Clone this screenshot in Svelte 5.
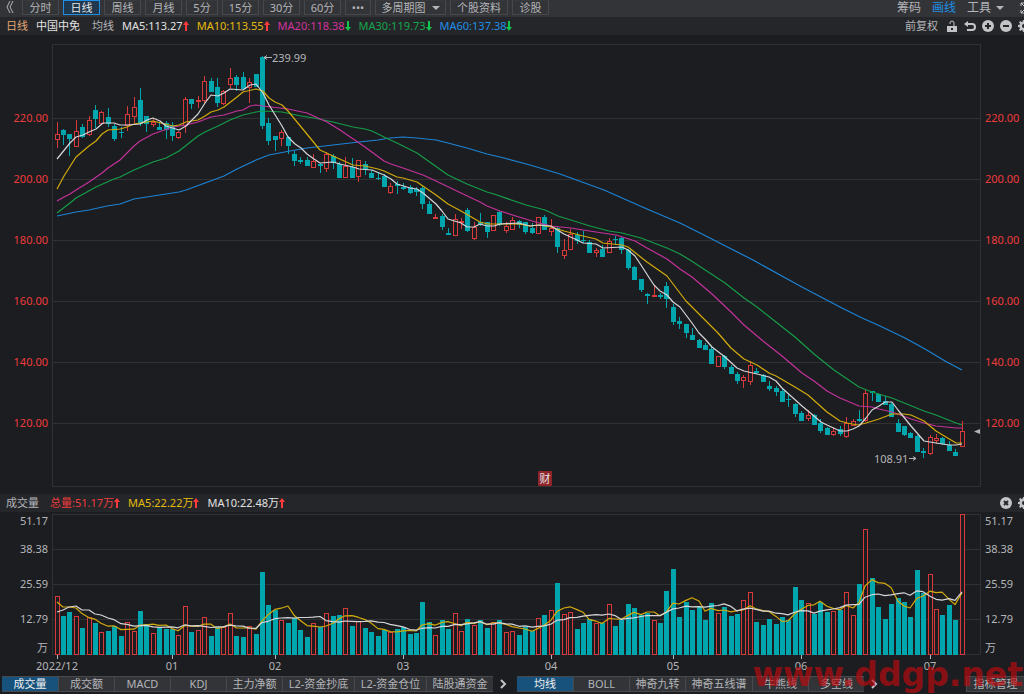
<script>
  const periods = [
    { label: '分时', size: 'std' },
    { label: '日线', size: 'std', active: true },
    { label: '周线', size: 'std' },
    { label: '月线', size: 'std' },
    { label: '5分', size: 'short' },
    { label: '15分', size: 'mid' },
    { label: '30分', size: 'mid' },
    { label: '60分', size: 'mid' },
    { label: '•••', size: 'dots' },
    { label: '多周期图', size: 'menu', caret: true },
    { label: '个股资料', size: 'wide' },
    { label: '诊股', size: 'std' }
  ];

  const averages = [
    { text: 'MA5:113.27', tone: 'white', up: true },
    { text: 'MA10:113.55', tone: 'yellow', up: true },
    { text: 'MA20:118.38', tone: 'pink', up: false },
    { text: 'MA30:119.73', tone: 'green', up: false },
    { text: 'MA60:137.38', tone: 'blue', up: false }
  ];

  const volumeStats = [
    { text: '总量:51.17万', tone: 'red' },
    { text: 'MA5:22.22万', tone: 'yellow' },
    { text: 'MA10:22.48万', tone: 'white' }
  ];

  const lowerTabs = [
    { label: '成交量', active: true },
    { label: '成交额' },
    { label: 'MACD' },
    { label: 'KDJ' },
    { label: '主力净额' },
    { label: 'L2-资金抄底', size: 'long' },
    { label: 'L2-资金仓位', size: 'long' },
    { label: '陆股通资金', size: 'five' }
  ];
  const upperTabs = [
    { label: '均线', active: true },
    { label: 'BOLL' },
    { label: '神奇九转' },
    { label: '神奇五线谱', size: 'five' },
    { label: '牛熊线' },
    { label: '多空线' }
  ];

  // One entry per session: direction, high, body top, body bottom, low, volume top.
  const sessions = `r 122 134 139 148 596|c 129 130 135 145 616|c 134 134 139 156 612|r 120 131 146 146 616|c 124 127 137 138 628|r 116 120 134 136 617|c 105 110 119 128 623|r 111 112 123 123 632|c 108 117 124 127 631|c 124 126 139 141 626
c 127 132 133 138 636|r 106 114 125 131 622|r 97 107 116 123 631|c 88 100 124 126 611|c 116 116 124 132 624|r 119 122 124 127 633|c 122 127 130 130 628|c 121 123 130 139 629|c 122 125 136 141 629|r 131 132 137 139 635
r 97 99 125 133 606|c 99 99 104 109 632|r 96 100 101 108 630|r 76 81 100 103 617|c 78 81 92 92 636|c 78 87 103 107 627|r 90 91 103 105 627|r 68 78 84 88 613|c 75 77 85 91 636|c 72 77 89 89 637
r 78 82 87 103 626|c 74 74 87 87 634|c 56 57 126 129 572|c 118 123 141 145 605|c 136 136 140 151 610|r 130 132 138 146 620|c 136 137 146 154 623|c 151 154 161 166 618|c 157 160 162 164 630|c 157 160 166 166 637
r 154 161 167 167 623|c 163 164 166 173 627|r 152 154 168 172 613|c 154 156 163 169 616|c 162 164 178 178 615|r 157 166 177 177 608|c 158 167 178 178 626|r 160 160 176 182 621|c 161 164 169 175 628|c 170 173 178 178 632
c 173 178 179 180 636|c 174 176 187 187 630|r 183 186 192 194 632|c 181 184 186 194 629|c 183 187 189 190 627|c 185 187 193 194 634|c 187 189 192 196 633|c 186 188 204 209 602|c 201 204 214 214 622|r 214 217 217 219 635
c 214 216 227 230 620|c 228 233 235 235 629|r 214 219 235 235 613|r 218 221 222 229 631|c 208 210 231 232 619|r 222 227 238 240 625|c 213 222 224 226 620|c 222 222 232 238 628|r 215 215 230 230 622|c 211 212 225 226 620
r 222 226 230 233 632|r 217 220 229 230 631|c 220 221 225 228 635|c 222 222 232 234 627|c 223 228 233 234 631|r 217 217 233 233 618|c 215 217 230 230 615|r 219 228 231 236 610|c 227 228 247 253 583|r 239 250 255 259 614
r 229 234 249 249 612|c 232 235 241 244 629|c 231 240 241 243 623|c 240 242 253 253 619|r 248 250 252 257 623|c 245 249 257 257 623|r 238 241 252 253 604|c 236 239 240 245 626|c 237 238 250 254 620|c 249 250 268 270 604
c 266 267 280 280 608|c 279 279 290 292 615|c 293 294 296 304 613|r 286 295 296 296 620|c 293 295 297 299 623|c 282 286 299 308 591|c 304 307 322 325 569|c 317 321 324 329 617|c 324 324 333 338 602|c 328 335 340 340 610
c 339 340 348 348 607|c 343 345 350 350 620|c 347 349 364 364 603|r 356 356 366 366 613|c 355 356 367 369 607|c 365 367 374 374 616|c 372 374 381 384 614|r 375 377 380 388 600|r 361 365 381 385 592|c 368 371 373 374 622
c 374 375 382 382 625|c 381 386 389 391 619|c 386 388 392 396 624|c 389 391 402 402 617|c 395 399 399 407 620|c 403 404 414 417 587|c 411 413 421 421 600|r 410 415 418 421 603|c 414 415 425 425 614|c 419 423 431 433 602
c 427 428 435 435 612|r 427 431 434 436 611|c 426 429 434 436 610|r 417 423 436 438 592|r 419 421 425 425 615|c 410 419 421 422 584|r 390 393 420 422 529|c 391 391 393 401 578|c 393 394 402 402 607|c 396 401 405 405 619
c 402 404 417 417 604|c 419 423 432 432 598|c 426 426 435 436 602|c 432 433 438 438 617|c 435 436 452 452 570|c 448 451 453 458 593|r 435 437 453 455 574|r 434 438 440 444 609|c 437 438 444 445 615|c 441 445 451 451 605
c 449 452 456 456 620|r 421 431 446 447 514`
    .split(/[|\n]/)
    .map((line, i) => {
      const [kind, ...n] = line.trim().split(' ');
      const [high, top, bottom, low, volume] = n.map(Number);
      return { x: Math.floor(57 + i * 6.42), rise: kind === 'r', high, top, bottom, low, volume };
    });

  function volumeAverage(span, lead) {
    return sessions
      .map((s, i) => {
        if (i < span - 1) return `${s.x},${lead[i]}`;
        const part = sessions.slice(i - span + 1, i + 1);
        return `${s.x},${(part.reduce((sum, p) => sum + p.volume, 0) / span).toFixed(1)}`;
      })
      .join(' ');
  }
  const volumeMa5 = volumeAverage(5, [602, 607, 607, 608]);
  const volumeMa10 = volumeAverage(10, [612, 610, 607, 606, 610, 610, 614, 615, 618]);

  const priceLines = [
    { tone: 'blue', points: '57,216 76,212 89,210 107,206 120,204 134,199 153,196 166,194 179,192 186,190 224,176 237,169 256,160 269,155 290,151 307,148 333,145 359,142 378,140 390,138 403,137 417,138 436,140 448,143 467,148 487,154 500,157 530,165 560,174 604,190 647,209 680,223 700,233 753,260 800,286 840,307 860,317 880,326 905,338 925,349 945,361 962,370' },
    { tone: 'green', points: '57,213 70,203 76,198 96,187 114,179 120,177 134,170 153,162 166,158 179,151 198,136 205,132 218,126 230,120 243,115 256,112 263,111 282,112 301,116 314,118 333,122 353,127 365,129 372,131 384,137 397,143 417,153 448,175 467,184 487,192 494,194 526,205 545,210 558,216 590,226 609,231 622,233 641,238 667,248 680,254 690,260 725,283 744,298 757,307 776,322 795,337 814,354 834,370 859,387 872,392 892,398 924,411 936,415 956,423 962,425' },
    { tone: 'pink', points: '57,201 64,197 70,194 76,190 89,182 102,173 108,168 120,160 134,146 140,141 153,134 173,127 186,125 198,122 211,117 224,115 237,111 243,110 250,106 256,105 263,106 288,109 307,113 327,122 340,130 365,147 384,161 391,164 403,168 423,175 436,181 461,193 480,202 487,206 500,211 519,217 539,223 551,226 571,228 583,230 596,232 616,235 635,241 647,248 667,259 680,269 692,277 712,294 731,312 744,325 763,341 782,356 802,373 814,381 827,391 840,398 859,406 872,407 879,409 892,412 911,419 924,423 936,426 956,428 962,428' },
    { tone: 'yellow', points: '57,189 64,176 76,157 89,146 96,141 102,134 108,130 120,129 127,127 134,124 153,121 173,126 179,125 186,122 198,120 205,116 211,112 218,110 224,107 237,97 243,92 256,89 263,91 269,98 275,102 282,105 288,111 320,150 333,156 353,165 365,166 378,169 384,171 397,177 403,178 410,180 417,182 436,195 448,204 461,211 480,222 488,224 500,224 519,224 530,226 539,225 551,227 564,231 583,236 596,239 603,243 622,245 628,247 647,262 667,276 686,301 699,314 718,333 731,348 744,359 757,365 769,373 776,376 795,387 808,395 827,412 840,421 847,423 858,425 866,423 879,419 892,414 904,414 911,415 924,421 936,431 956,443 962,443' },
    { tone: 'white', points: '57,159 70,143 76,137 83,135 89,132 96,129 103,123 114,123 120,125 127,125 140,124 147,120 153,118 160,121 166,126 179,130 186,126 198,114 205,103 211,95 218,96 224,93 230,89 243,90 250,85 256,84 263,93 269,105 282,126 288,137 295,144 301,148 307,154 314,159 320,163 333,162 340,164 353,167 359,169 372,170 384,175 391,179 397,184 410,188 417,189 423,193 436,204 442,211 448,219 461,223 467,227 474,227 480,224 487,226 494,226 500,224 519,223 530,226 539,225 551,226 564,234 577,240 583,243 596,244 603,248 622,247 628,250 635,256 641,265 650,279 654,285 660,291 667,295 673,302 680,307 692,323 699,333 705,339 712,347 725,357 737,368 744,371 757,374 769,377 776,381 782,388 802,406 814,416 821,422 827,425 840,431 847,431 853,429 859,426 866,418 872,410 879,406 885,402 892,402 898,410 911,426 924,441 936,443 949,445 956,445 962,444' }
  ];

  const priceTicks = [
    { y: 118, label: '220.00' },
    { y: 179, label: '200.00' },
    { y: 240, label: '180.00' },
    { y: 301, label: '160.00' },
    { y: 362, label: '140.00' },
    { y: 423, label: '120.00' }
  ];
  const volumeTicks = [
    { y: 521, label: '51.17' },
    { y: 549, label: '38.38', grid: true },
    { y: 584, label: '25.59', grid: true },
    { y: 619, label: '12.79', grid: true },
    { y: 648, label: '万' }
  ];
  const months = [
    { x: 57, label: '2022/12' },
    { x: 172, label: '01' },
    { x: 275, label: '02' },
    { x: 403, label: '03' },
    { x: 551, label: '04' },
    { x: 673, label: '05' },
    { x: 801, label: '06' },
    { x: 930, label: '07' }
  ];
</script>

{#snippet arrow(up)}
  <svg class="arrow" class:up viewBox="0 0 6 10" aria-hidden="true">
    <path d={up ? 'M3 0 6 4H4V10H2V4H0Z' : 'M3 10 0 6H2V0H4V6H6Z'} />
  </svg>
{/snippet}

{#snippet gear()}
  <svg class="icon" viewBox="0 0 12 12" aria-hidden="true">
    <path fill-rule="evenodd" d="M5 0h2l.3 1.6 1 .4L9.700 1.100 11 2.400 10 3.700l.4 1L12 5v2l-1.600.300-.400 1L11 9.700 9.700 11 8.300 10l-1 .4L7 12H5l-.300-1.600-1-.400L2.300 11 1 9.700 2 8.300l-.4-1L0 7V5l1.600-.300.400-1L1 2.300 2.300 1l1.400 1 1-.4ZM6 4a2 2 0 1 0 0 4 2 2 0 0 0 0-4Z" />
  </svg>
{/snippet}

{#snippet tab(item)}
  <button class="tab {item.size ?? ''}" class:active={item.active}>{item.label}</button>
{/snippet}

{#snippet chevron()}
  <button class="next" aria-label="更多">
    <svg viewBox="0 0 7 10" aria-hidden="true"><path d="M1 1 5 5 1 9" /></svg>
  </button>
{/snippet}

<main>
  <nav class="toolbar">
    <button class="collapse" aria-label="收起">
      <svg viewBox="0 0 8 12" aria-hidden="true"><path d="M4 0 1 6 4 12M7 0 4 6 7 12" /></svg>
    </button>
    {#each periods as p}
      <button class="period {p.size}" class:active={p.active}>
        {p.label}{#if p.caret}<i class="caret"></i>{/if}
      </button>
    {/each}
    <div class="tools">
      <button>筹码</button>
      <button class="on">画线</button>
      <button>工具<i class="caret"></i></button>
      <button aria-label="全屏">
        <svg class="icon" viewBox="0 0 12 12" aria-hidden="true">
          <path class="line" d="M1 4V1H4M8 1h3V4M11 8v3H8M4 11H1V8M1 1 4 4M1 11 4 8" />
        </svg>
      </button>
    </div>
  </nav>

  <header class="strip">
    <span class="orange">日线</span>
    <span class="white name">中国中免</span>
    <span class="group">均线</span>
    {#each averages as a}
      <span class="stat {a.tone}">{a.text}{@render arrow(a.up)}</span>
    {/each}
    <div class="actions">
      <button class="adjust">前复权</button>
      <button aria-label="锁定">
        <svg class="icon" viewBox="0 0 12 12" aria-hidden="true">
          <path fill-rule="evenodd" d="M1 6h10v6H1ZM5 8v2h2V8Z" /><path class="line" d="M4 4V3a2 2 0 0 1 4 0V6" />
        </svg>
      </button>
      <button aria-label="撤销">
        <svg class="icon" viewBox="0 0 12 12" aria-hidden="true">
          <path d="M0 4 4 1V7Z" /><path class="line bold" d="M2 4H8a3 3 0 0 1 0 6H3" />
        </svg>
      </button>
      <button aria-label="放大">
        <svg class="icon" viewBox="0 0 12 12" aria-hidden="true">
          <circle cx="6" cy="6" r="6" /><path class="cut" d="M6 3V9M3 6H9" />
        </svg>
      </button>
      <button aria-label="缩小">
        <svg class="icon" viewBox="0 0 12 12" aria-hidden="true">
          <circle cx="6" cy="6" r="6" /><path class="cut" d="M3 6H9" />
        </svg>
      </button>
      <button aria-label="设置">{@render gear()}</button>
    </div>
  </header>

  <svg class="chart" viewBox="0 35 1024 459" role="img" aria-label="日线">
    <g class="grid">
      <rect x="52.5" y="44.5" width="928" height="442" />
      {#each priceTicks as t}
        <path d="M53 {t.y + 0.5}H980" />
      {/each}
    </g>
    {#each priceTicks as t}
      <text class="price end" x="48" y={t.y + 4}>{t.label}</text>
      <text class="price" x="985" y={t.y + 4}>{t.label}</text>
    {/each}
    <g class="bars">
      {#each sessions as s}
        {#if s.rise}
          <path class="rise" d="M{s.x + 0.5} {s.high}V{s.top}M{s.x + 0.5} {s.bottom}V{s.low}" />
          <rect class="rise" x={s.x - 1.5} y={s.top + 0.5} width="4" height={Math.max(s.bottom - s.top, 1)} />
        {:else}
          <path class="fall" d="M{s.x + 0.5} {s.high}V{s.low}" />
          <rect class="fall" x={s.x - 2} y={s.top} width="5" height={Math.max(s.bottom - s.top, 1)} />
        {/if}
      {/each}
    </g>
    {#each priceLines as l}
      <polyline class="line-{l.tone}" points={l.points} />
    {/each}
    <path class="mark" d="M264 57.500H272M264 57.500l3-2M264 57.500l3 2" />
    <text x="272" y="62">239.99</text>
    <text x="874" y="463">108.91</text>
    <path class="mark" d="M909 458.500H916M916 458.500l-3-2M916 458.500l-3 2" />
    <path class="pointer" d="M974 431.500 980 429V434Z" />
    <rect class="stamp" x="538" y="471" width="14" height="15" rx="1" />
    <text class="stamp-text" x="545" y="483">财</text>
  </svg>

  <header class="strip volume-head">
    <span class="group">成交量</span>
    {#each volumeStats as v}
      <span class="stat {v.tone}">{v.text}{@render arrow(true)}</span>
    {/each}
    <div class="actions">
      <button aria-label="关闭">
        <svg class="icon" viewBox="0 0 12 12" aria-hidden="true">
          <circle cx="6" cy="6" r="6" /><path class="cut" d="M4 4 8 8M8 4 4 8" />
        </svg>
      </button>
      <button aria-label="设置">{@render gear()}</button>
    </div>
  </header>

  <svg class="chart" viewBox="0 512 1024 164" role="img" aria-label="成交量">
    <g class="grid">
      <rect x="52.5" y="514.5" width="928" height="140" />
      {#each volumeTicks.filter((t) => t.grid) as t}
        <path d="M53 {t.y + 0.5}H980" />
      {/each}
    </g>
    {#each volumeTicks as t}
      <text class="end" x="48" y={t.y + 4}>{t.label}</text>
      <text x="985" y={t.y + 4}>{t.label}</text>
    {/each}
    <g class="bars">
      {#each sessions as s}
        {#if s.rise}
          <rect class="rise" x={s.x - 1.5} y={s.volume + 0.5} width="4" height={654 - s.volume} />
        {:else}
          <rect class="fall" x={s.x - 2} y={s.volume} width="5" height={655 - s.volume} />
        {/if}
      {/each}
    </g>
    <polyline class="line-yellow" points={volumeMa5} />
    <polyline class="line-white" points={volumeMa10} />
    {#each months as m}
      <path class="mark" d="M{m.x + 0.5} 655V659" />
      <text class="middle" x={m.x} y="670">{m.label}</text>
    {/each}
  </svg>

  <footer>
    <div class="tabs">
      {#each lowerTabs as item}{@render tab(item)}{/each}
    </div>
    {@render chevron()}
    <div class="tabs">
      {#each upperTabs as item}{@render tab(item)}{/each}
    </div>
    {@render chevron()}
    <button class="tab manage">指标管理</button>
  </footer>

  <div class="watermark">www.ddgp.net</div>
</main>

<style>
  :global(body) {
    background: #1c1d21;
  }
  main {
    position: relative;
    overflow: hidden;
    background: #1c1d21;
    color: #b4b5b8;
    font: 11px/14px 'Noto Sans', 'Noto Sans CJK SC', sans-serif;
  }
  button {
    margin: 0;
    padding: 0;
    border: 0;
    background: none;
    color: inherit;
    font: inherit;
    white-space: nowrap;
    cursor: pointer;
  }
  svg {
    display: block;
  }
  .toolbar {
    display: flex;
    align-items: flex-start;
    gap: 4px;
    height: 17px;
    background: #333438;
  }
  .collapse {
    width: 18px;
    height: 14px;
    padding-left: 6px;
    box-sizing: border-box;
  }
  .collapse svg {
    width: 8px;
    height: 12px;
    fill: none;
    stroke: #b4b5b8;
  }
  .period {
    display: flex;
    align-items: center;
    justify-content: center;
    gap: 6px;
    box-sizing: border-box;
    height: 15px;
    border: 1px solid #47484c;
    border-top-color: #38393d;
  }
  .period.active {
    border-color: #1f8fe5;
    background: #20384e;
    color: #e6e6e6;
  }
  .std { width: 37px; }
  .short { width: 32px; }
  .mid { width: 37px; }
  .dots { width: 26px; }
  .menu { width: 71px; }
  .wide { width: 58px; }
  .caret {
    border: 4px solid transparent;
    border-top-color: #b4b5b8;
    border-bottom: 0;
  }
  .tools {
    display: flex;
    gap: 11px;
    margin-left: auto;
    margin-right: -8px;
    font-size: 12px;
  }
  .tools button {
    display: flex;
    align-items: center;
    gap: 5px;
    height: 15px;
  }
  .tools button:last-child {
    margin-left: 5px;
  }
  .on { color: #1f8fe5; }
  .strip {
    display: flex;
    align-items: center;
    gap: 8px;
    height: 18px;
    padding-left: 6px;
    background: #25262a;
    white-space: nowrap;
  }
  .name { margin-right: 4px; }
  .stat {
    display: flex;
    align-items: center;
  }
  .volume-head .group { margin-right: 3px; }
  .arrow {
    width: 6px;
    height: 10px;
    fill: #14c44c;
  }
  .arrow.up { fill: #ff3b3b; }
  .orange { color: #e2a875; }
  .white { color: #e2e2e2; }
  .yellow { color: #e3bb0b; }
  .pink { color: #d2339c; }
  .green { color: #17a64a; }
  .blue { color: #1f8fe5; }
  .red { color: #ee3b3b; }
  .actions {
    display: flex;
    align-items: center;
    gap: 6px;
    margin-left: auto;
    margin-right: -6px;
  }
  .adjust { margin-right: 2px; }
  .icon {
    width: 12px;
    height: 12px;
    fill: #c3c4c6;
  }
  .icon .line {
    fill: none;
    stroke: #c3c4c6;
  }
  .icon .bold { stroke-width: 2; }
  .icon .cut {
    fill: none;
    stroke: #25262a;
    stroke-width: 2;
  }
  .chart {
    width: 100%;
    height: auto;
    overflow: hidden;
  }
  .chart text { fill: #b4b5b8; }
  .chart .price { fill: #ee3b3b; }
  .chart .end { text-anchor: end; }
  .chart .middle { text-anchor: middle; }
  .chart polyline {
    fill: none;
    stroke-width: 1.2;
    stroke-linejoin: round;
  }
  .grid {
    fill: none;
    stroke: #303135;
  }
  .bars { shape-rendering: crispEdges; }
  .rise {
    fill: #1c1d21;
    stroke: #d63a3a;
  }
  .bars path.fall { stroke: #00a6ae; }
  .bars rect.fall { fill: #00a6ae; }
  .line-white { stroke: #d6d6d8; }
  .line-yellow { stroke: #d2aa0c; }
  .line-pink { stroke: #c3329a; }
  .line-green { stroke: #169c48; }
  .line-blue { stroke: #1d83d4; }
  .mark {
    fill: none;
    stroke: #b4b5b8;
  }
  .pointer { fill: #b4b5b8; }
  .stamp { fill: #8f2529; }
  .chart .stamp-text {
    fill: #e2e2e2;
    text-anchor: middle;
  }
  footer {
    display: flex;
    align-items: flex-start;
    height: 18px;
    padding-left: 2px;
  }
  .tabs {
    display: flex;
    gap: 1px;
    background: #48494d;
  }
  .tab {
    box-sizing: border-box;
    width: 55px;
    height: 16px;
    border-top: 1px solid #48494d;
    border-bottom: 1px solid #48494d;
    background: #333438;
    line-height: 14px;
  }
  .tab.long { width: 71px; }
  .tab.five { width: 66px; }
  .tab.active {
    width: 56px;
    background: #17527c;
    color: #f0f0f0;
  }
  .next {
    display: flex;
    align-items: center;
    justify-content: center;
    width: 24px;
    height: 16px;
    padding-right: 4px;
    box-sizing: border-box;
  }
  .next svg {
    width: 7px;
    height: 10px;
    fill: none;
    stroke: #c3c4c6;
    stroke-width: 2;
  }
  .manage {
    width: 58px;
    margin-left: auto;
    border-left: 1px solid #48494d;
  }
  .watermark {
    position: absolute;
    right: 1px;
    bottom: 0;
    color: rgba(190, 10, 14, 0.68);
    font: bold 33px/38px 'DejaVu Sans', sans-serif;
    pointer-events: none;
  }
</style>
